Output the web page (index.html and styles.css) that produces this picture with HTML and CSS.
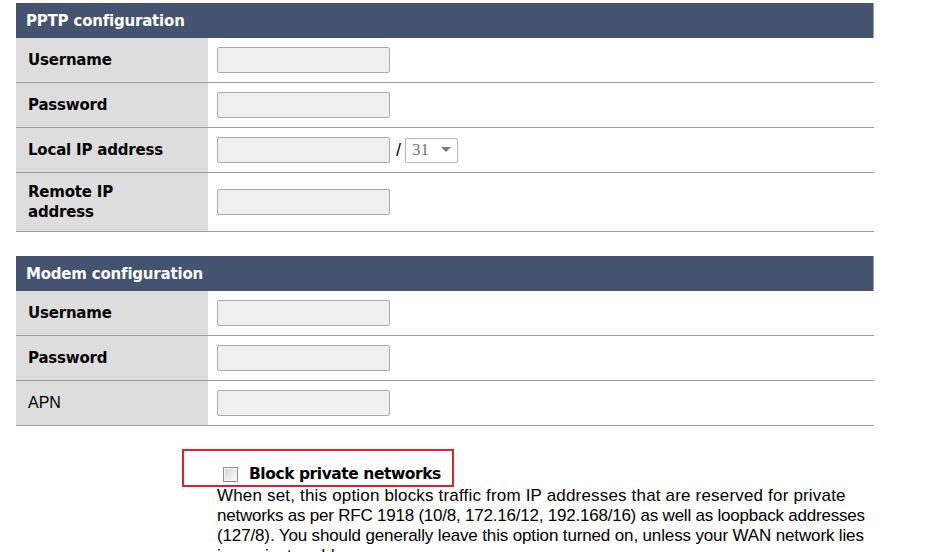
FILE: index.html
```html
<!DOCTYPE html>
<html>
<head>
<meta charset="utf-8">
<link rel="stylesheet" href="styles.css">
</head>
<body>
<div class="page">
  <table class="cfg">
    <tr><th colspan="2" class="head">PPTP configuration</th></tr>
    <tr><td class="lbl">Username</td><td class="val"><input class="txt" type="text"></td></tr>
    <tr><td class="lbl">Password</td><td class="val"><input class="txt" type="text"></td></tr>
    <tr><td class="lbl">Local IP address</td><td class="val"><div class="ipline"><input class="txt" type="text"><span class="slash">/</span><span class="sel"><span class="selval">31</span><span class="arrow"></span></span></div></td></tr>
    <tr><td class="lbl">Remote IP<br>address</td><td class="val"><input class="txt" type="text"></td></tr>
  </table>

  <table class="cfg second">
    <tr><th colspan="2" class="head">Modem configuration</th></tr>
    <tr><td class="lbl">Username</td><td class="val"><input class="txt" type="text"></td></tr>
    <tr><td class="lbl">Password</td><td class="val"><input class="txt" type="text"></td></tr>
    <tr><td class="lbl plain">APN</td><td class="val"><input class="txt" type="text"></td></tr>
  </table>

  <div class="option">
    <div class="opt-title"><span class="cb"></span><span class="opt-name">Block private networks</span></div>
    <span class="mark"></span>
    <p class="desc"><span class="ln l1">When set, this option blocks traffic from IP addresses that are reserved for private</span><span class="ln l2">networks as per RFC 1918 (10/8, 172.16/12, 192.168/16) as well as loopback addresses</span><span class="ln l3">(127/8). You should generally leave this option turned on, unless your WAN network lies</span><span class="ln l4">in a private address space.</span></p>
  </div>
</div>
</body>
</html>
```
FILE: styles.css
```css
html, body {
  margin: 0;
  padding: 0;
  background: #fff;
}
body {
  font-family: "Liberation Sans", Arial, sans-serif;
  color: #000;
  overflow: hidden;
}
.page {
  padding: 3px 0 0 16px;
  width: 858px;
}
.cfg {
  width: 858px;
  border-collapse: collapse;
  border-spacing: 0;
}
.cfg.second {
  margin-top: 24px;
}
.head {
  height: 35px;
  padding: 0 0 0 10px;
  background: #44536f;
  color: #fff;
  text-align: left;
  font-family: "DejaVu Sans", Verdana, sans-serif;
  font-weight: bold;
  font-size: 15px;
  box-shadow: inset -1px 0 0 #9aa0a8;
  letter-spacing: -0.2px;
}
.cfg td {
  border-bottom: 1px solid #9c9c9c;
  padding: 9px 0;
  vertical-align: middle;
}
.lbl {
  width: 180px;
  padding-left: 12px !important;
  background: #dddddd;
  font-family: "DejaVu Sans", Verdana, sans-serif;
  font-weight: bold;
  font-size: 15px;
  line-height: 20px;
  letter-spacing: -0.2px;
}
.cfg .lbl.plain {
  font-weight: normal;
  font-family: "Liberation Sans", Arial, sans-serif;
  font-size: 16px;
  letter-spacing: 0;
}
.val {
  padding-left: 9px !important;
}
.txt {
  display: block;
  box-sizing: border-box;
  width: 173px;
  height: 26px;
  margin: 0;
  border: 1px solid #ababab;
  border-radius: 2px;
  background: #f0f0f0;
  padding: 0 4px;
}
.ipline {
  display: flex;
  align-items: center;
}
.slash {
  margin: 0 4px 0 6px;
  font-size: 18px;
  line-height: 20px;
  font-family: "Liberation Sans", Arial, sans-serif;
}
.sel {
  box-sizing: border-box;
  width: 53px;
  height: 25px;
  border: 1px solid #b4b4b4;
  border-radius: 2px;
  background: #fff;
  display: flex;
  align-items: center;
  justify-content: space-between;
  padding: 0 6px 0 6px;
}
.selval {
  color: #777;
  font-family: "Liberation Serif", "Times New Roman", serif;
  font-size: 17px;
}
.arrow {
  width: 0;
  height: 0;
  border-left: 5px solid transparent;
  border-right: 5px solid transparent;
  border-top: 5px solid #7a7a7a;
  margin-bottom: 1px;
}
.option {
  position: relative;
  margin: 0 0 0 201px;
  padding-top: 39px;
}
.opt-title {
  display: flex;
  align-items: center;
  padding-left: 6px;
  height: 18px;
  margin-bottom: 3px;
}
.cb {
  box-sizing: border-box;
  width: 15px;
  height: 15px;
  border: 1px solid #8f8f8f;
  background: linear-gradient(135deg, #d4d4d4 0%, #eeeeee 60%, #fafafa 100%);
  box-shadow: inset 0 0 0 1px #f4f4f4;
  margin-right: 11px;
}
.opt-name {
  font-family: "DejaVu Sans", Verdana, sans-serif;
  font-weight: bold;
  font-size: 15.5px;
  letter-spacing: -0.45px;
}
.mark {
  position: absolute;
  left: -35px;
  top: 23px;
  width: 268px;
  height: 34px;
  border: 2px solid #e0202a;
}
.desc {
  margin: 0;
  width: 700px;
  white-space: nowrap;
  font-size: 17px;
  line-height: 20px;
}
.ln {
  display: block;
}
.l1 {
  letter-spacing: 0.18px;
}
.l2 {
  letter-spacing: -0.22px;
}
.l3 {
  letter-spacing: -0.14px;
}
.l4 {
  letter-spacing: 0.1px;
}
```
